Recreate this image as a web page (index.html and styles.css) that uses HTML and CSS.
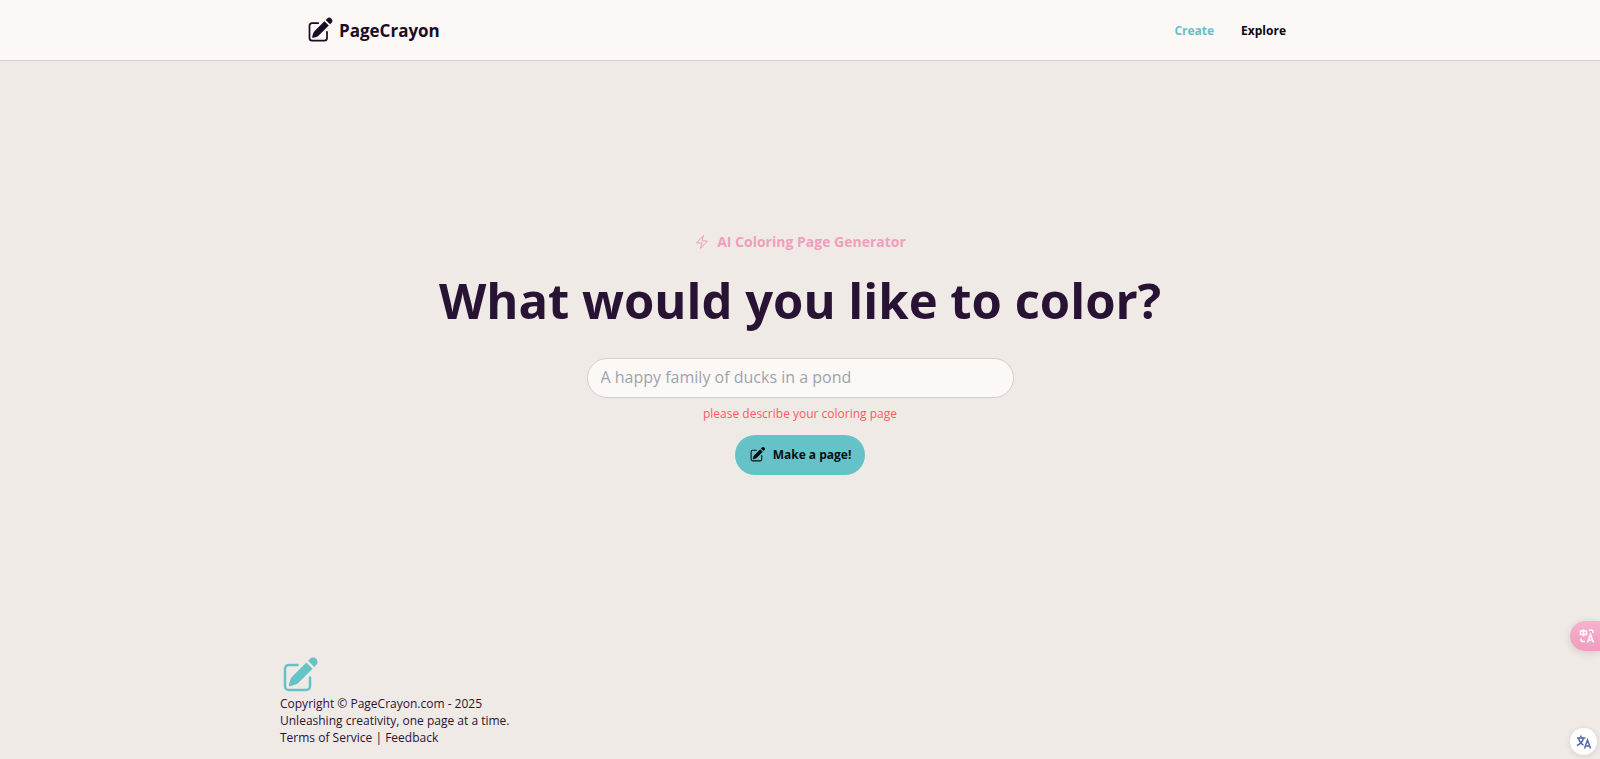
FILE: index.html
```html
<!DOCTYPE html>
<html lang="en">
<head>
  <meta charset="UTF-8" />
  <meta name="viewport" content="width=device-width, initial-scale=1.0"/>
  <title>PageCrayon</title>
  <link rel="stylesheet" href="styles.css">
</head>
<body>
  <svg class="sprite" aria-hidden="true">
    <symbol id="pencil" viewBox="0 0 24 24">
      <path d="M21.731 2.269a2.625 2.625 0 00-3.712 0l-1.157 1.157 3.712 3.712 1.157-1.157a2.625 2.625 0 000-3.712zM19.513 8.199l-3.712-3.712-8.4 8.4a5.25 5.25 0 00-1.32 2.214l-.8 2.685a.75.75 0 00.933.933l2.685-.8a5.25 5.25 0 002.214-1.32l8.4-8.4z"/>
      <path d="M5.25 5.25a3 3 0 00-3 3v10.5a3 3 0 003 3h10.5a3 3 0 003-3V13.5a.75.75 0 00-1.5 0v5.25a1.5 1.5 0 01-1.5 1.5H5.25a1.5 1.5 0 01-1.5-1.5V8.25a1.5 1.5 0 011.5-1.5h5.25a.75.75 0 000-1.5H5.25z"/>
    </symbol>
  </svg>

  <header class="header">
    <div class="container navbar">
      <a href="#" class="logo">
        <svg class="logo-icon"><use href="#pencil"/></svg>
        PageCrayon
      </a>
      <nav class="nav">
        <a href="#" class="active">Create</a>
        <a href="#">Explore</a>
      </nav>
    </div>
  </header>

  <main class="hero">
    <p class="tagline">
      <svg class="bolt" viewBox="0 0 24 24"><path d="M3.75 13.5l10.5-11.25L12 10.5h8.25L9.75 21.75 12 13.5H3.75z"/></svg>
      AI Coloring Page Generator
    </p>
    <h1>What would you like to color?</h1>
    <form class="form">
      <input type="text" id="prompt" aria-label="Describe your coloring page" aria-describedby="error" placeholder="A happy family of ducks in a pond">
      <p class="error" id="error">please describe your coloring page</p>
      <button type="button">
        <svg class="btn-icon"><use href="#pencil"/></svg>
        Make a page!
      </button>
    </form>
  </main>

  <footer class="container footer">
    <svg class="footer-icon"><use href="#pencil"/></svg>
    <p>Copyright © PageCrayon.com - 2025</p>
    <p>Unleashing creativity, one page at a time.</p>
    <p><a href="#">Terms of Service</a> | <a href="#">Feedback</a></p>
  </footer>

  <button type="button" class="translate-tab" aria-label="Translate page">
    <svg viewBox="0 0 16 16">
      <path d="M1.5 3h6v3.500h-6zM4.500 1v7.500M10 2h2.500a1.500 1.500 0 0 1 1.500 1.500V5M2 10.500V12a1.500 1.500 0 0 0 1.500 1.500H6M8.500 14.500l3-8 3 8M9.500 12h4"/>
    </svg>
  </button>
  <button type="button" class="translate-round" aria-label="Translate text">
    <svg viewBox="0 0 16 16">
      <path d="M1 4h8.500M5 1.500V4M2.500 4c1 4 3 6 5 7M7.500 4c-1 4-3 6-6.500 7.500M8.500 14.500l3-8.500 3 8.500M9.500 12h4"/>
    </svg>
  </button>
</body>
</html>
```
FILE: styles.css
```css
:root {
  --base: #fcf8f5;
  --fundo: #efeae6;
  --teal: #65c3c8;
  --pink: #ef9fbc;
  --dark: #291334;
}

* {
  box-sizing: border-box;
}

body {
  margin: 0;
  min-height: 100vh;
  display: flex;
  flex-direction: column;
  font-family: "Segoe UI", "Open Sans", sans-serif;
  font-size: 12px;
  background-color: var(--fundo);
  color: var(--dark);
}

a {
  color: inherit;
  text-decoration: none;
}

p, h1 {
  margin: 0;
}

svg {
  fill: currentColor;
  flex-shrink: 0;
}

.sprite {
  display: none;
}

.container {
  width: 100%;
  max-width: 1040px;
  margin: 0 auto;
}

.header {
  background-color: var(--base);
  border-bottom: 1px solid #d4cfcc;
}

.navbar {
  display: flex;
  align-items: center;
  justify-content: space-between;
  height: 60px;
  padding: 0 34px 0 26px;
}

.logo {
  display: flex;
  align-items: center;
  gap: 5px;
  font-size: 17px;
  font-weight: 700;
  color: #1c0d26;
}

.logo-icon {
  width: 28px;
  height: 28px;
}

.nav {
  display: flex;
  gap: 27px;
  font-weight: 700;
  color: #0b0612;
}

.nav .active {
  color: var(--teal);
}

.hero {
  flex: 1;
  display: flex;
  flex-direction: column;
  align-items: center;
  justify-content: center;
  padding: 0 16px 2px;
}

.tagline {
  display: flex;
  align-items: center;
  gap: 7px;
  font-size: 14px;
  line-height: 20px;
  font-weight: 700;
  color: var(--pink);
}

.bolt {
  width: 16px;
  height: 16px;
  fill: none;
  stroke: currentColor;
  stroke-width: 1.5;
  stroke-linejoin: round;
}

h1 {
  margin: 18px 0 28px;
  font-size: 49px;
  line-height: 60px;
  font-weight: 700;
  text-align: center;
}

.form {
  display: flex;
  flex-direction: column;
  align-items: center;
  width: 100%;
  max-width: 427px;
}

.form input {
  width: 100%;
  height: 40px;
  padding: 0 13px 2px;
  border: 1px solid #d4cfcf;
  border-radius: 20px;
  background-color: var(--base);
  color: var(--dark);
  font-family: inherit;
  font-size: 16px;
}

.form input::placeholder {
  color: #9ca3af;
}

.error {
  margin: 6px 0 12px;
  line-height: 19px;
  color: #ff5861;
}

.form button {
  display: flex;
  align-items: center;
  gap: 7px;
  height: 40px;
  padding: 0 14px;
  border: none;
  border-radius: 20px;
  background-color: var(--teal);
  color: #050f10;
  font-family: inherit;
  font-size: 12px;
  font-weight: 700;
  cursor: pointer;
}

.btn-icon {
  width: 17px;
  height: 17px;
}

.footer {
  padding: 8px 0 13px;
  line-height: 17px;
}

.footer-icon {
  display: block;
  width: 40px;
  height: 40px;
  color: var(--teal);
}

/* floating translate buttons */
.translate-tab, .translate-round {
  position: fixed;
  display: flex;
  align-items: center;
  padding: 0;
  border: none;
  cursor: pointer;
}

.translate-tab svg, .translate-round svg {
  width: 16px;
  height: 16px;
  fill: none;
  stroke: currentColor;
  stroke-width: 1.5;
}

.translate-tab {
  right: 0;
  bottom: 108px;
  width: 30px;
  height: 30px;
  padding-left: 9px;
  border-radius: 15px 0 0 15px;
  background: linear-gradient(#f7b2cd, #f09dbd);
  color: #fff;
  box-shadow: 0 2px 8px rgba(0,0,0,0.12);
}

.translate-round {
  right: 3px;
  bottom: 4px;
  width: 27px;
  height: 27px;
  justify-content: center;
  border-radius: 50%;
  background-color: #fff;
  color: #5468aa;
  box-shadow: 0 1px 6px rgba(0,0,0,0.12);
}
```
